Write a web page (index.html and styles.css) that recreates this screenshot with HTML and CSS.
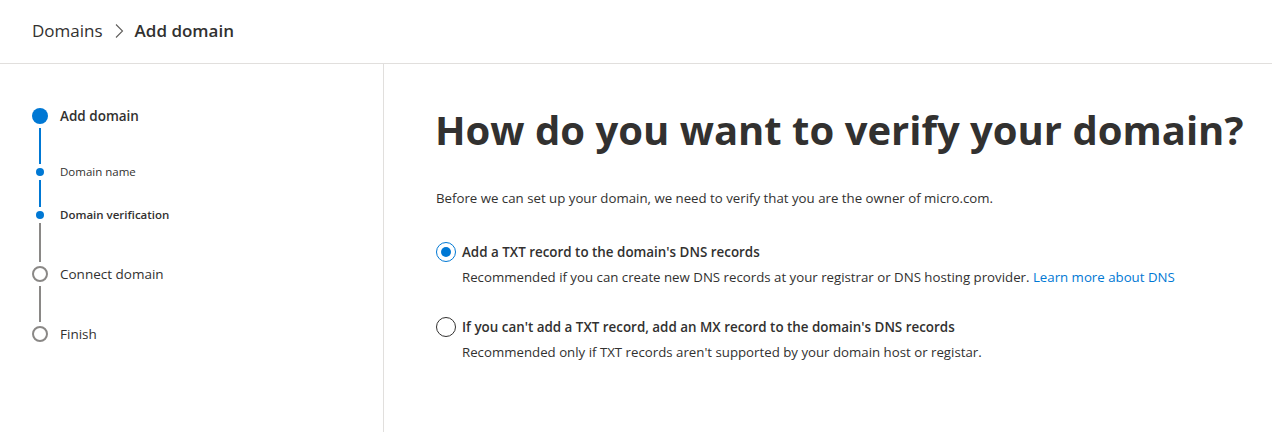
FILE: index.html
```html
<!DOCTYPE html>
<html lang="en">
<head>
<meta charset="utf-8">
<title>Add domain</title>
<link rel="stylesheet" href="styles.css">
</head>
<body>
<header class="header">
  <nav class="crumbs">
    <span class="crumb">Domains</span>
    <svg class="chev" width="10" height="16" viewBox="0 0 10 16"><path d="M2 1.5 L8.5 8 L2 14.5" fill="none" stroke="#605e5c" stroke-width="1.1"/></svg>
    <span class="crumb current">Add domain</span>
  </nav>
</header>
<main class="layout">
  <aside class="side">
    <ol class="steps">
      <li class="step"><span class="ind"><span class="big done"></span></span><span class="lbl main-lbl">Add domain</span></li>
      <li class="conn blue c1"></li>
      <li class="step"><span class="ind"><span class="dot"></span></span><span class="lbl sub">Domain name</span></li>
      <li class="conn blue c2"></li>
      <li class="step"><span class="ind"><span class="dot"></span></span><span class="lbl sub active">Domain verification</span></li>
      <li class="conn grey c3"></li>
      <li class="step"><span class="ind"><span class="big todo"></span></span><span class="lbl main-lbl">Connect domain</span></li>
      <li class="conn grey c4"></li>
      <li class="step"><span class="ind"><span class="big todo"></span></span><span class="lbl main-lbl">Finish</span></li>
    </ol>
  </aside>
  <section class="content">
    <h1 class="title">How do you want to verify your domain?</h1>
    <p class="intro">Before we can set up your domain, we need to verify that you are the owner of micro.com.</p>
    <div class="options">
      <div class="option">
        <span class="radio checked"></span>
        <div class="opt-text">
          <div class="opt-title">Add a TXT record to the domain's DNS records</div>
          <div class="opt-desc">Recommended if you can create new DNS records at your registrar or DNS hosting provider. <a class="link" href="#">Learn more about DNS</a></div>
        </div>
      </div>
      <div class="option">
        <span class="radio"></span>
        <div class="opt-text">
          <div class="opt-title">If you can't add a TXT record, add an MX record to the domain's DNS records</div>
          <div class="opt-desc">Recommended only if TXT records aren't supported by your domain host or registar.</div>
        </div>
      </div>
    </div>
  </section>
</main>
</body>
</html>
```
FILE: styles.css
```css
* { box-sizing: border-box; }
html, body { margin: 0; padding: 0; height: 100%; }
body {
  font-family: "Open Sans", "Noto Sans", sans-serif;
  color: #323130;
  background: #fff;
  display: flex;
  flex-direction: column;
  overflow: hidden;
}
.header {
  height: 64px;
  border-bottom: 1px solid #e1dfdd;
  display: flex;
  align-items: center;
  padding-left: 32px;
  padding-bottom: 2px;
  flex: none;
}
.crumbs { display: flex; align-items: center; gap: 0; }
.crumb { font-size: 17px; color: #323130; }
.crumb.current { font-weight: 600; }
.chev { margin: 0 11px 0 11px; }
.layout { flex: 1; display: flex; }
.side {
  width: 384px;
  border-right: 1px solid #e1dfdd;
  padding: 44px 0 0 32px;
  flex: none;
}
.steps { list-style: none; margin: 0; padding: 0; }
.step { display: flex; align-items: center; height: 16px; }
.ind { width: 16px; height: 16px; display: flex; align-items: center; justify-content: center; flex: none; }
.big { width: 16px; height: 16px; border-radius: 50%; }
.big.done { background: #0078d4; }
.big.todo { border: 2px solid #8a8886; }
.dot { width: 8px; height: 8px; border-radius: 50%; background: #0078d4; }
.lbl { margin-left: 12px; white-space: nowrap; }
.main-lbl { font-size: 13.5px; }
.step:first-child .main-lbl { font-weight: 600; }
.sub { font-size: 11.5px; line-height: 14px; margin-top: -1px; }
.sub.active { font-weight: 600; }
.conn { width: 2px; margin-left: 7px; }
.conn.blue { background: #0078d4; }
.conn.grey { background: #8a8886; }
.c1 { height: 36px; margin-top: 4px; }
.c2 { height: 27px; }
.c3 { height: 39px; margin-bottom: 4px; }
.c4 { height: 36px; margin-top: 4px; margin-bottom: 4px; }
.content { padding: 38px 0 0 51px; }
.title {
  margin: 0;
  font-size: 40px;
  font-weight: 700;
  line-height: 56px;
  color: #323130;
  white-space: nowrap;
}
.intro { margin: 30px 0 0 1px; font-size: 13.25px; line-height: 20px; }
.options { margin: 34px 0 0 1px; display: flex; flex-direction: column; gap: 30px; }
.option { display: flex; align-items: flex-start; }
.radio {
  width: 20px; height: 20px; border-radius: 50%;
  border: 1px solid #323130;
  flex: none;
  display: flex; align-items: center; justify-content: center;
  margin-right: 6px;
}
.radio.checked { border-color: #0078d4; }
.radio.checked::after { content: ""; width: 10px; height: 10px; border-radius: 50%; background: #0078d4; }
.opt-title { font-size: 13.4px; font-weight: 600; line-height: 20px; }
.opt-desc { font-size: 13.25px; line-height: 20px; margin-top: 5px; color: #323130; }
.link { color: #0078d4; text-decoration: none; }
```
